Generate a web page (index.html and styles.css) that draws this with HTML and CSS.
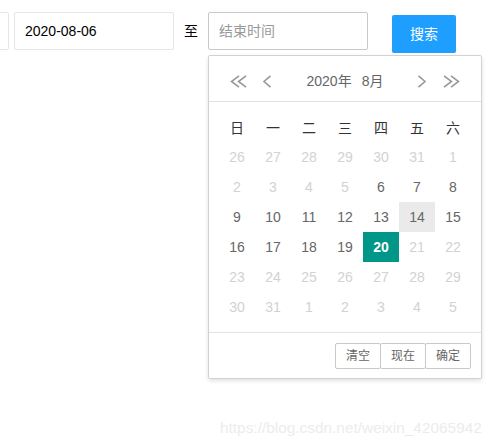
FILE: index.html
```html
<!DOCTYPE html>
<html lang="zh">
<head>
<meta charset="utf-8">
<title>laydate</title>
<link rel="stylesheet" href="styles.css">
</head>
<body>
<div class="bar">
  <div class="input input-cut"></div>
  <div class="input">2020-08-06</div>
  <span class="to">至</span>
  <div class="input input-active placeholder">结束时间</div>
  <button class="btn">搜索</button>
</div>

<div class="laydate">
  <div class="ld-header">
    <svg class="ico prev-y" width="20" height="13" viewBox="0 0 20 13"><path d="M10 0.8 L2.5 6.5 L10 12.2 M17 0.8 L9.5 6.5 L17 12.2"/></svg>
    <svg class="ico prev-m" width="11" height="13" viewBox="0 0 11 13"><path d="M8.5 0.8 L2 6.5 L8.5 12.2"/></svg>
    <div class="ym"><span>2020年</span><span>8月</span></div>
    <svg class="ico next-m" width="11" height="13" viewBox="0 0 11 13"><path d="M2.5 0.8 L9 6.5 L2.5 12.2"/></svg>
    <svg class="ico next-y" width="20" height="13" viewBox="0 0 20 13"><path d="M3 0.8 L10.5 6.5 L3 12.2 M10 0.8 L17.5 6.5 L10 12.2"/></svg>
  </div>
  <div class="ld-content">
    <div class="grid">
      <div class="th">日</div><div class="th">一</div><div class="th">二</div><div class="th">三</div><div class="th">四</div><div class="th">五</div><div class="th">六</div>
      <div class="d off">26</div><div class="d off">27</div><div class="d off">28</div><div class="d off">29</div><div class="d off">30</div><div class="d off">31</div><div class="d off">1</div>
      <div class="d off">2</div><div class="d off">3</div><div class="d off">4</div><div class="d off">5</div><div class="d">6</div><div class="d">7</div><div class="d">8</div>
      <div class="d">9</div><div class="d">10</div><div class="d">11</div><div class="d">12</div><div class="d">13</div><div class="d hover">14</div><div class="d">15</div>
      <div class="d">16</div><div class="d">17</div><div class="d">18</div><div class="d">19</div><div class="d this">20</div><div class="d off">21</div><div class="d off">22</div>
      <div class="d off">23</div><div class="d off">24</div><div class="d off">25</div><div class="d off">26</div><div class="d off">27</div><div class="d off">28</div><div class="d off">29</div>
      <div class="d off">30</div><div class="d off">31</div><div class="d off">1</div><div class="d off">2</div><div class="d off">3</div><div class="d off">4</div><div class="d off">5</div>
    </div>
  </div>
  <div class="ld-footer">
    <span class="fbtn">清空</span><span class="fbtn">现在</span><span class="fbtn">确定</span>
  </div>
</div>

<div class="watermark">https://blog.csdn.net/weixin_42065942</div>
</body>
</html>
```

FILE: styles.css
```css
* { box-sizing: border-box; }
html, body { margin: 0; padding: 0; background: #fff; }
body {
  width: 500px;
  height: 446px;
  overflow: hidden;
  position: relative;
  font-family: "Liberation Sans", Arial, "Noto Sans CJK SC", sans-serif;
  font-size: 14px;
  color: #666;
}
.bar {
  display: flex;
  align-items: flex-start;
  padding-top: 12px;
}
.input {
  width: 160px;
  height: 38px;
  line-height: 36px;
  border: 1px solid #e6e6e6;
  border-radius: 2px;
  padding-left: 10px;
  color: #000;
  flex: none;
}
.input-cut { margin-left: -151px; margin-right: 5px; }
.input-active { border-color: #c9c9c9; }
.placeholder { color: #999; }
.to {
  color: #000;
  line-height: 38px;
  margin: 0 10px;
}
.btn {
  margin-top: 3px;
  margin-left: 24px;
  height: 38px;
  padding: 0 18px;
  border: none;
  border-radius: 2px;
  background: #1E9FFF;
  color: #fff;
  font-family: inherit;
  font-size: 14px;
  line-height: 38px;
}
.laydate {
  position: absolute;
  left: 208px;
  top: 55px;
  width: 274px;
  background: #fff;
  border: 1px solid #d2d2d2;
  border-radius: 2px;
  box-shadow: 0 2px 4px rgba(0,0,0,.12);
}
.ld-header {
  position: relative;
  height: 46px;
  padding: 10px 70px 5px;
  border-bottom: 1px solid #e2e2e2;
  line-height: 30px;
}
.ym { text-align: center; color: #666; }
.ym span { padding: 0 5px; }
.ico {
  position: absolute;
  top: 19px;
  fill: none;
  stroke: #999;
  stroke-width: 1.6;
}
.prev-y { left: 20px; }
.prev-m { left: 53px; }
.next-m { right: 54px; }
.next-y { right: 20px; }
.ld-content { padding: 10px; }
.grid {
  display: grid;
  grid-template-columns: repeat(7, 36px);
  grid-auto-rows: 30px;
}
.th, .d {
  display: flex;
  align-items: center;
  justify-content: center;
}
.th { color: #333; }
.d { color: #666; }
.d.off { color: #d2d2d2; }
.d.hover { background: #eaeaea; }
.d.this { background: #009688; color: #fff; font-weight: bold; }
.ld-footer {
  height: 46px;
  border-top: 1px solid #e2e2e2;
  display: flex;
  justify-content: flex-end;
  padding: 10px;
}
.fbtn {
  height: 26px;
  line-height: 24px;
  padding: 0 10px;
  margin-left: -1px;
  border: 1px solid #c9c9c9;
  border-radius: 2px;
  font-size: 12px;
  color: #666;
  background: #fff;
}
.watermark {
  position: absolute;
  left: 220px;
  top: 419px;
  font-size: 15.4px;
  color: #ececec;
  white-space: nowrap;
}
```
